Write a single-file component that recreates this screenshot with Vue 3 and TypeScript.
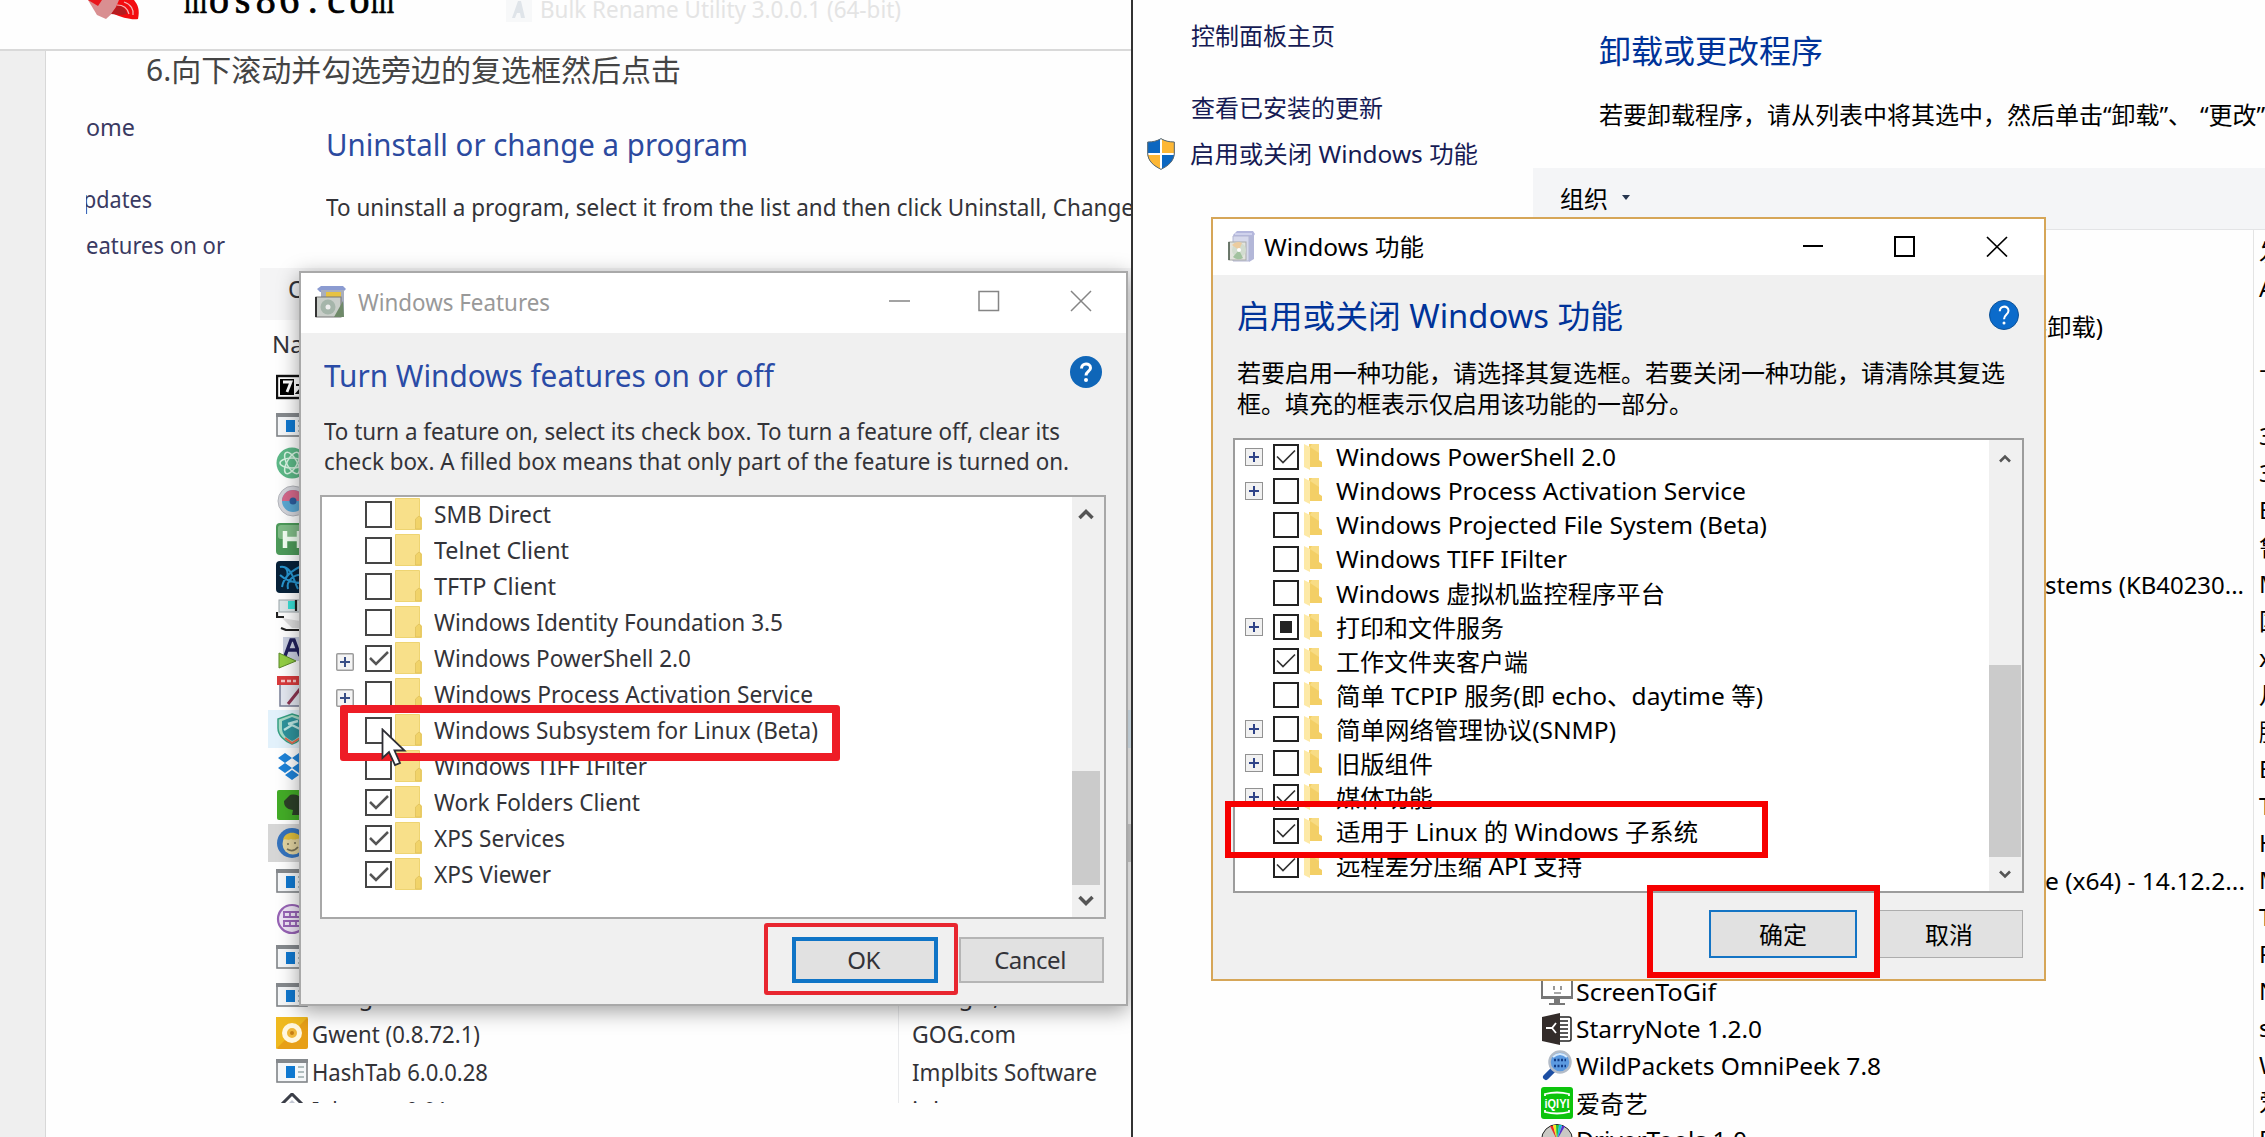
<script setup lang="ts">
import type { Directive } from 'vue'

type Check = 'on' | 'off' | 'part'

interface Feature {
  label: string
  width: number
  check: Check
  expand?: boolean
}

interface Program {
  icon: string
  name?: string
  width?: number
  publisher?: string
  publisherWidth?: number
  state?: string
}

interface InstalledRow {
  icon?: string
  name?: string
  width?: number
  tail?: string
  tailWidth?: number
  early?: boolean
  publisher: string
}

// Condenses or widens a single line so that it occupies the given width.
const vFit: Directive<HTMLElement, number | undefined> = {
  mounted(el, binding) {
    if (!binding.value) return
    const natural = el.getBoundingClientRect().width
    if (natural > 0) el.style.transform = `scaleX(${binding.value / natural})`
  },
}

const brand = [...'mos86.com']

const englishFeatures: Feature[] = [
  { label: 'SMB Direct', width: 117, check: 'off' },
  { label: 'Telnet Client', width: 135, check: 'off' },
  { label: 'TFTP Client', width: 122, check: 'off' },
  { label: 'Windows Identity Foundation 3.5', width: 349, check: 'off' },
  { label: 'Windows PowerShell 2.0', width: 257, check: 'on', expand: true },
  { label: 'Windows Process Activation Service', width: 379, check: 'off', expand: true },
  { label: 'Windows Subsystem for Linux (Beta)', width: 384, check: 'off' },
  { label: 'Windows TIFF IFilter', width: 213, check: 'off' },
  { label: 'Work Folders Client', width: 206, check: 'on' },
  { label: 'XPS Services', width: 131, check: 'on' },
  { label: 'XPS Viewer', width: 117, check: 'on' },
]

const chineseFeatures: Feature[] = [
  { label: 'Windows PowerShell 2.0', width: 280, check: 'on', expand: true },
  { label: 'Windows Process Activation Service', width: 410, check: 'off', expand: true },
  { label: 'Windows Projected File System (Beta)', width: 431, check: 'off' },
  { label: 'Windows TIFF IFilter', width: 231, check: 'off' },
  { label: 'Windows 虚拟机监控程序平台', width: 329, check: 'off' },
  { label: '打印和文件服务', width: 168, check: 'part', expand: true },
  { label: '工作文件夹客户端', width: 192, check: 'on' },
  { label: '简单 TCPIP 服务(即 echo、daytime 等)', width: 427, check: 'off' },
  { label: '简单网络管理协议(SNMP)', width: 280, check: 'off', expand: true },
  { label: '旧版组件', width: 97, check: 'off', expand: true },
  { label: '媒体功能', width: 97, check: 'on', expand: true },
  { label: '适用于 Linux 的 Windows 子系统', width: 362, check: 'on' },
  { label: '远程差分压缩 API 支持', width: 246, check: 'on' },
]

const programs: Program[] = [
  { icon: 'zip' },
  { icon: 'app' },
  { icon: 'atom' },
  { icon: 'disc' },
  { icon: 'h' },
  { icon: 'swirl' },
  { icon: 'pc' },
  { icon: 'a' },
  { icon: 'pdf' },
  { icon: 'shield', state: 'hover' },
  { icon: 'drop' },
  { icon: 'leaf' },
  { icon: 'vault', state: 'picked' },
  { icon: 'app' },
  { icon: 'ddc' },
  { icon: 'app' },
  { icon: 'app', name: 'Google Chrome', publisher: 'Google, Inc.' },
  { icon: 'gwent', name: 'Gwent (0.8.72.1)', width: 168, publisher: 'GOG.com', publisherWidth: 104 },
  { icon: 'app', name: 'HashTab 6.0.0.28', width: 176, publisher: 'Implbits Software', publisherWidth: 185 },
  { icon: 'ink', name: 'Inkscape 0.91', width: 136, publisher: 'inkscape.org' },
]

const installed: InstalledRow[] = [
  { publisher: 'Adobe' },
  { tail: '装卸载)', tailWidth: 80, early: true, publisher: '' },
  { publisher: '上海' },
  { publisher: '' },
  { publisher: '360' },
  { publisher: '360' },
  { publisher: 'Eclipse' },
  { publisher: '鲁大师' },
  { tail: 'stems (KB40230...', tailWidth: 199, publisher: 'Microsoft' },
  { publisher: '国网' },
  { publisher: 'xterm' },
  { publisher: '月光' },
  { publisher: '腾讯' },
  { publisher: 'Epic' },
  { publisher: 'Tencent' },
  { publisher: 'Huawei' },
  { tail: 'e (x64) - 14.12.2...', tailWidth: 200, publisher: 'Microsoft' },
  { publisher: 'Tim' },
  { publisher: 'Python' },
  { icon: 'screen', name: 'ScreenToGif', width: 140, publisher: 'Nicke' },
  { icon: 'starry', name: 'StarryNote 1.2.0', width: 186, publisher: 'starry' },
  { icon: 'peek', name: 'WildPackets OmniPeek 7.8', width: 305, publisher: 'WildPackets' },
  { icon: 'iqiyi', name: '爱奇艺', width: 72, publisher: '爱奇艺' },
  { icon: 'cd', name: 'DriverTools 1.0', width: 171, publisher: 'DriverTools' },
]
</script>

<template>
  <div class="stage">
    <section class="left">
      <header class="site">
        <svg class="logo" viewBox="0 0 52 20">
          <path d="M0 0H34L30 8L18 19L9 15Z" fill="#d98f91" />
          <path d="M0 0H14L10 6Z" fill="#e9161c" />
          <path d="M31 0H46C50 5 52 10 50 19C44 20 34 18 24 13L28 7Z" fill="#f30c10" />
          <path d="M30 5C36 7 38 10 39 14L34 15L23 14Z" fill="#b61c20" />
          <path d="M29 5C37 5 40 10 41 14M36 2C43 4 46 10 45 15" stroke="#f3b9b9" stroke-width="1.2" fill="none" />
        </svg>
        <span class="brand"><span v-for="(c, i) in brand" :key="i" class="cell"><span v-fit="c === 'm' ? 23 : undefined" class="glyph">{{ c }}</span></span></span>
        <svg class="ghost-icon" viewBox="0 0 26 22">
          <rect width="26" height="22" fill="#f7f8f9" />
          <path d="M6 18L12 1H15L19 18H15L14 13H11L9 18Z" fill="#dfe4e9" />
        </svg>
        <span v-fit="361" class="t ghost">Bulk Rename Utility 3.0.0.1 (64-bit)</span>
      </header>
      <div class="page">
        <article class="article">
          <p class="caption"><span v-fit="535" class="t">6.向下滚动并勾选旁边的复选框然后点击</span></p>
          <div class="shot">
            <nav class="shot-nav">
              <div><span v-fit="49" class="t">ome</span></div>
              <div><span v-fit="69" class="t shift">pdates</span></div>
              <div><span v-fit="139" class="t">eatures on or</span></div>
            </nav>
            <div class="shot-main">
              <h2><span v-fit="422" class="t">Uninstall or change a program</span></h2>
              <p class="lead"><span v-fit="808" class="t">To uninstall a program, select it from the list and then click Uninstall, Change</span></p>
              <div class="shot-bar">Organize</div>
              <div class="shot-head">Name</div>
              <div class="programs">
                <div v-for="(p, i) in programs" :key="i" class="program" :class="p.state">
                  <svg class="p-icon" viewBox="0 0 32 32">
                    <g v-if="p.icon === 'app'">
                      <rect x="1" y="5" width="30" height="22" fill="#f5f7f9" stroke="#808488" stroke-width="1.6" />
                      <rect x="0" y="4" width="32" height="4" fill="#85898d" />
                      <rect x="10" y="11" width="9" height="12" fill="#0f78d0" />
                      <path d="M22 12H28M22 17H28M22 22H28" stroke="#9aa" stroke-width="1.6" />
                    </g>
                    <g v-else-if="p.icon === 'zip'">
                      <rect x="1" y="5" width="30" height="22" fill="#fff" stroke="#111" stroke-width="2.4" />
                      <rect x="4" y="8" width="14" height="16" fill="#000" />
                      <path d="M7 11H15L11 21" stroke="#fff" stroke-width="2.8" fill="none" />
                      <path d="M20 14H28L21 22H28" stroke="#111" stroke-width="2" fill="none" />
                    </g>
                    <g v-else-if="p.icon === 'atom'">
                      <circle cx="16" cy="16" r="15.5" fill="#5cb887" />
                      <g fill="none" stroke="#d7f3e2" stroke-width="1.5">
                        <ellipse cx="16" cy="16" rx="12" ry="5" />
                        <ellipse cx="16" cy="16" rx="12" ry="5" transform="rotate(60 16 16)" />
                        <ellipse cx="16" cy="16" rx="12" ry="5" transform="rotate(120 16 16)" />
                      </g>
                    </g>
                    <g v-else-if="p.icon === 'disc'">
                      <circle cx="17" cy="16" r="15" fill="#d5d6dc" stroke="#b3b5bb" />
                      <circle cx="17" cy="16" r="11" fill="#5aa7d2" />
                      <path d="M6 16A11 11 0 0 1 28 16Z" fill="#d5688a" />
                      <circle cx="17" cy="16" r="3.5" fill="#2c5d9c" />
                    </g>
                    <g v-else-if="p.icon === 'h'">
                      <rect width="32" height="32" rx="4" fill="#4d9a5a" />
                      <rect x="2" y="2" width="28" height="14" rx="3" fill="#80bb87" />
                      <path d="M9 8V25M23 8V25M9 16H23" stroke="#f3fff3" stroke-width="4.5" />
                    </g>
                    <g v-else-if="p.icon === 'swirl'">
                      <rect width="32" height="32" rx="4" fill="#07223a" />
                      <path d="M4 6C12 4 14 14 8 20M6 26C8 14 18 8 28 4M12 28C10 20 18 12 28 14M4 14C10 20 18 22 28 22M8 6C16 8 18 20 22 28" stroke="#2795cf" stroke-width="2" fill="none" />
                    </g>
                    <g v-else-if="p.icon === 'pc'">
                      <rect x="3" y="1" width="22" height="12" fill="#dce6e8" stroke="#9aa4a8" />
                      <rect x="12" y="2" width="8" height="8" fill="#38dcd3" />
                      <path d="M20 1V12M1 13V18H8M5 29L10 31H30" stroke="#222" stroke-width="2.2" fill="none" />
                      <path d="M6 19L16 29H28L24 22Z" fill="#dedede" />
                    </g>
                    <g v-else-if="p.icon === 'a'">
                      <rect x="7" y="0" width="24" height="24" fill="#c9cfe0" />
                      <path d="M9 19L15 3H18L24 19M11 13H21" stroke="#20215c" stroke-width="3.4" fill="none" />
                      <path d="M3 16L20 24L3 31Z" fill="#93cf45" stroke="#5c8a2a" />
                    </g>
                    <g v-else-if="p.icon === 'pdf'">
                      <rect x="4" y="6" width="24" height="25" fill="#e3e7f0" stroke="#777e96" stroke-width="1.5" />
                      <rect x="1" y="1" width="26" height="9" fill="#d93a3c" />
                      <path d="M12 29L24 14" stroke="#8c3451" stroke-width="3" />
                      <path d="M5 6H20" stroke="#f6c5c5" stroke-width="2.5" stroke-dasharray="4 2" />
                    </g>
                    <g v-else-if="p.icon === 'shield'">
                      <path d="M16 1L29 5V15C29 24 22 29 16 31C8 28 2 22 2 15V6Z" fill="#a9dcc8" stroke="#36a084" stroke-width="1.5" />
                      <path d="M16 4L26 8V15C26 22 21 26 16 28C10 25 6 21 6 15V8Z" fill="#2f939c" />
                      <path d="M8 17L16 12L24 16M12 11L22 8" stroke="#bde7e3" stroke-width="2.4" fill="none" />
                      <path d="M9 25L16 30L24 25" stroke="#e16a50" stroke-width="2" fill="none" />
                    </g>
                    <g v-else-if="p.icon === 'drop'" fill="#1f83d8">
                      <path d="M9 2L16 7L9 12L2 7ZM23 2L30 7L23 12L16 7ZM9 12L16 17L9 22L2 17ZM23 12L30 17L23 22L16 17ZM16 19L23 24L16 29L9 24Z" />
                    </g>
                    <g v-else-if="p.icon === 'leaf'">
                      <rect x="1" y="1" width="30" height="30" rx="2" fill="#43ac27" />
                      <path d="M8 12L14 6C22 4 27 8 26 18L23 26H16L17 21C10 20 8 17 8 12Z" fill="#2d4028" />
                    </g>
                    <g v-else-if="p.icon === 'vault'">
                      <circle cx="16" cy="16" r="15" fill="#3573bd" />
                      <circle cx="17" cy="17" r="10.5" fill="#e2d4a1" />
                      <path d="M7 13C9 3 23 4 26 12C22 10 20 14 15 12C12 14 9 11 7 13Z" fill="#dfbd3c" />
                      <path d="M12 16V18M19 15V17M11 22Q17 26 22 20" stroke="#7b7458" stroke-width="1.6" fill="none" />
                    </g>
                    <g v-else-if="p.icon === 'ddc'">
                      <circle cx="16" cy="16" r="14" fill="#efe5f6" stroke="#9763b5" stroke-width="2.2" />
                      <path d="M7 9H26M7 14H26M7 18H26M7 23H26M8 9V14M14 9V14M20 9V14M8 18V23M14 18V23M20 18V23" stroke="#9763b5" stroke-width="1.8" />
                    </g>
                    <g v-else-if="p.icon === 'gwent'">
                      <rect width="32" height="32" rx="2" fill="#e79f17" />
                      <path d="M0 0H32L0 32Z" fill="#efb91f" />
                      <circle cx="16" cy="16" r="7.5" fill="#f0b73a" stroke="#fff7df" stroke-width="5" />
                      <circle cx="16" cy="16" r="2" fill="#c47c12" />
                    </g>
                    <g v-else>
                      <path d="M16 1L29 14L16 26L3 14Z" fill="#fff" stroke="#3b3e48" stroke-width="3" />
                      <path d="M16 7L24 15H8Z" fill="#c3c8d4" />
                    </g>
                  </svg>
                  <span class="p-name"><span v-if="p.name" v-fit="p.width" class="t">{{ p.name }}</span></span>
                  <span v-if="p.publisher" v-fit="p.publisherWidth" class="t">{{ p.publisher }}</span>
                </div>
              </div>
            </div>
          </div>
        </article>
      </div>

      <div class="dialog en">
        <div class="titlebar">
          <svg class="d-icon" viewBox="0 0 32 32">
            <path d="M2 3L6 0H28L31 3L28 6H5Z" fill="#8b9bd1" />
            <rect x="6" y="4" width="23" height="26" fill="#a8aebe" />
            <rect x="11" y="6" width="15" height="8" fill="#e6c243" />
            <rect x="1" y="11" width="25" height="20" fill="#c9cec9" stroke="#777" stroke-width="1" />
            <circle cx="13" cy="21" r="7.5" fill="#a5b5aa" />
            <circle cx="13" cy="21" r="2.5" fill="#eee" />
            <path d="M19 31L28 15L29 31Z" fill="#6f8a69" />
            <path d="M1 11V31" stroke="#333" stroke-width="2" />
          </svg>
          <span v-fit="192" class="t d-title">Windows Features</span>
          <svg class="controls" viewBox="0 0 204 22">
            <g fill="none" stroke="#858585" stroke-width="1.5">
              <path d="M1 11H22M91 1.500H110.500V20.500H91ZM183 1L203 21M203 1L183 21" />
            </g>
          </svg>
        </div>
        <div class="d-head">
          <h3><span v-fit="450" class="t">Turn Windows features on or off</span></h3>
          <svg class="help" viewBox="0 0 32 32"><circle cx="16" cy="16" r="16" fill="#0f66b8" /><path d="M11.500 12.500C11.500 6.500 20.500 6.500 20.500 12C20.500 15.500 16 15.500 16 19.500" fill="none" stroke="#fff" stroke-width="3" /><circle cx="16" cy="24" r="2" fill="#fff" /></svg>
        </div>
        <p class="d-text">
          <span v-fit="736" class="t">To turn a feature on, select its check box. To turn a feature off, clear its</span>
          <span v-fit="745" class="t">check box. A filled box means that only part of the feature is turned on.</span>
        </p>
        <div class="tree">
          <div class="rows">
            <div v-for="f in englishFeatures" :key="f.label" class="row">
              <span class="expander"><svg v-if="f.expand" viewBox="0 0 18 18"><rect x=".75" y=".75" width="16.500" height="16.500" rx="1" fill="#f4f4f4" stroke="#9c9c9c" stroke-width="1.500" /><path d="M4 9H14M9 4V14" stroke="#3a4f86" stroke-width="2" /></svg></span>
              <svg class="box" viewBox="0 0 27 27"><rect x="1" y="1" width="25" height="25" fill="#fff" stroke="#454545" stroke-width="2" /><path v-if="f.check === 'on'" d="M5 13L11 19L23 7" fill="none" stroke="#555" stroke-width="2.500" /></svg>
              <svg class="folder" viewBox="0 0 27 32"><path d="M.5.5H24.500V18L26.500 20V31.500H.5Z" fill="#f8e08a" stroke="#eed472" /><path d="M24 18L20.500 21V31H26V20Z" fill="#f1d369" stroke="#e0c05c" stroke-width=".8" /></svg>
              <span v-fit="f.width" class="t">{{ f.label }}</span>
            </div>
          </div>
          <div class="scroll">
            <svg viewBox="0 0 16 13"><path d="M1.500 10L8 3.500L14.500 10" fill="none" stroke="#555" stroke-width="3.500" /></svg>
            <i></i>
            <svg viewBox="0 0 16 13"><path d="M1.500 3L8 9.500L14.500 3" fill="none" stroke="#555" stroke-width="3.500" /></svg>
          </div>
        </div>
        <footer class="buttons">
          <button class="ok">OK</button>
          <button>Cancel</button>
        </footer>
      </div>
      <div class="mark en-row"></div>
      <div class="mark en-ok"></div>
      <svg class="cursor" viewBox="0 0 26 39"><path d="M1.500 1.500V30L8 24L14 37L19 35L13.500 22.500H23.500Z" fill="#fff" stroke="#2e2e35" stroke-width="1.800" /></svg>
    </section>

    <section class="right">
      <nav class="cp-nav">
        <a>控制面板主页</a>
        <a>查看已安装的更新</a>
        <a class="with-shield">
          <svg viewBox="0 0 28 32">
            <path d="M14 .5C18 3 22 4 27.500 4V15C27.500 23 21 28 14 31.500C7 28 .5 23 .5 15V4C6 4 10 3 14 .5Z" fill="#0c67c0" />
            <path d="M14 .5C18 3 22 4 27.500 4V15.500H14Z" fill="#fdb735" />
            <path d="M.5 15.500H14V31.500C7 28 .5 23 .5 15.500Z" fill="#fdb735" />
            <path d="M14 1V31M1 16H27" stroke="#fff" stroke-width="2" />
            <path d="M14 .7C18 3 22 4 27.300 4V15C27.300 23 21 28 14 31.300C7 28 .7 23 .7 15V4C6 4 10 3 14 .7Z" fill="none" stroke="#5c6a72" />
          </svg>
          <span v-fit="288" class="t">启用或关闭 Windows 功能</span>
        </a>
      </nav>
      <div class="cp-main">
        <h2>卸载或更改程序</h2>
        <p class="lead">若要卸载程序，请从列表中将其选中，然后单击<span class="q">“</span>卸载<span class="q">”</span><span class="comma">、</span><span class="q">“</span>更改<span class="q">”</span>或</p>
        <div class="cp-bar">组织<svg viewBox="0 0 8 5"><path d="M0 0H8L4 5Z" fill="#26354f" /></svg></div>
        <div class="cp-list">
          <div class="names">
            <div v-for="(r, i) in installed" :key="i" class="installed">
              <svg v-if="r.icon" class="p-icon" viewBox="0 0 32 32">
                <g v-if="r.icon === 'screen'">
                  <rect x="1" y="0" width="30" height="22" fill="#fff" stroke="#777" stroke-width="2" />
                  <rect x="0" y="20" width="32" height="3" fill="#777" />
                  <path d="M13 23H19V27H24V29H8V27H13Z" fill="#777" />
                  <path d="M13 10V14M20 10V14M13 17H20" stroke="#555" stroke-width="1.200" />
                </g>
                <g v-else-if="r.icon === 'starry'">
                  <rect x="14" y="4" width="16" height="24" rx="2" fill="#fff" stroke="#222" stroke-width="1.500" />
                  <path d="M19 8H27M19 12H27M19 16H27M19 20H27M19 24H27" stroke="#222" stroke-width="1.300" />
                  <path d="M1 4L19 0V32L1 28Z" fill="#332c2a" />
                  <path d="M5 15L11 15L15 10M11 15L15 20" stroke="#fff" stroke-width="1.800" fill="none" />
                </g>
                <g v-else-if="r.icon === 'peek'">
                  <path d="M5 27L13 19" stroke="#1d4fa3" stroke-width="6" stroke-linecap="round" />
                  <circle cx="19" cy="12" r="10.500" fill="#5c9ae0" stroke="#b3bcc8" stroke-width="2.500" />
                  <path d="M13 10H25M13 16H25" stroke="#123c87" stroke-width="2.600" stroke-dasharray="2 1.500" />
                  <path d="M12 7Q19 1 26 7" stroke="#d8eafc" stroke-width="2" fill="none" />
                </g>
                <g v-else-if="r.icon === 'iqiyi'">
                  <rect width="32" height="32" rx="3" fill="#0cc40c" />
                  <path d="M4 9V7Q16 4 28 7V9M4 23V25Q16 28 28 25V23" stroke="#fff" stroke-width="1.800" fill="none" />
                  <text x="16" y="21" text-anchor="middle" class="iq" textLength="25" lengthAdjust="spacingAndGlyphs">iQIYI</text>
                </g>
                <g v-else>
                  <circle cx="16" cy="16" r="15.500" fill="#c9c9c4" stroke="#222" />
                  <path d="M16 16L9 2H12Z" fill="#ed2b24" /><path d="M16 16L12 1H15Z" fill="#f7e81c" />
                  <path d="M16 16L15 1H18Z" fill="#1fc13a" /><path d="M16 16L18 1H21Z" fill="#14bfe2" />
                  <path d="M16 16L21 2H24Z" fill="#5631c9" />
                </g>
              </svg>
              <span v-if="r.name" v-fit="r.width" class="t">{{ r.name }}</span>
              <span v-if="r.tail" class="tail" :class="{ early: r.early }"><span v-fit="r.tailWidth" class="t">{{ r.tail }}</span></span>
            </div>
          </div>
          <div class="pubs">
            <div class="pub head">发布者</div>
            <div v-for="(r, i) in installed" :key="i" class="pub">{{ r.publisher }}</div>
          </div>
        </div>
      </div>

      <div class="dialog zh">
        <div class="titlebar">
          <svg class="d-icon" viewBox="0 0 28 32">
            <path d="M5 4L9 0H25L27 3L25 6H6Z" fill="#b4b7dd" />
            <path d="M7 3H24" stroke="#d9dbf0" stroke-width="1.500" />
            <path d="M5 5H21V30H5Z" fill="#d6d9ec" stroke="#b3b6d2" />
            <path d="M21 6L26 4V28L21 31Z" fill="#b3b7d8" />
            <rect x="1" y="11" width="17" height="18" fill="#e3e4de" stroke="#a9aba9" />
            <circle cx="11" cy="19" r="7" fill="#d2dccf" />
            <path d="M11 19L4 14A8 8 0 0 1 14 12Z" fill="#ecccA0" />
            <path d="M11 19L5 26A8 8 0 0 0 15 27Z" fill="#a2c29f" />
            <circle cx="11" cy="19" r="2" fill="#fff" />
            <path d="M1 11V29" stroke="#4a5a4a" stroke-width="1.500" />
          </svg>
          <span v-fit="160" class="t d-title">Windows 功能</span>
          <svg class="controls" viewBox="0 0 205 21">
            <g fill="none" stroke="#000" stroke-width="2">
              <path d="M0 10H20M92 1H111V20H92Z" />
              <path d="M184 1L204 20.500M204 1L184 20.500" stroke-width="1.700" />
            </g>
          </svg>
        </div>
        <div class="d-head">
          <h3><span v-fit="386" class="t">启用或关闭 Windows 功能</span></h3>
          <svg class="help" viewBox="0 0 32 32"><circle cx="16" cy="16" r="15.500" fill="#0b6bcb" stroke="#0b4f94" /><path d="M11.500 12C11.500 5.500 20.800 5.500 20.800 11.500C20.800 15.500 16 15.500 16 20.500" fill="none" stroke="#fff" stroke-width="2.200" /><circle cx="16" cy="24.500" r="1.600" fill="#fff" /></svg>
        </div>
        <p class="d-text">
          <span class="t">若要启用一种功能，请选择其复选框。若要关闭一种功能，请清除其复选</span>
          <span class="t">框。填充的框表示仅启用该功能的一部分。</span>
        </p>
        <div class="tree">
          <div class="rows">
            <div v-for="f in chineseFeatures" :key="f.label" class="row">
              <span class="expander"><svg v-if="f.expand" viewBox="0 0 18 18"><rect x=".5" y=".5" width="17" height="17" fill="#f1f1f1" stroke="#929292" /><path d="M4 9H14M9 4V14" stroke="#2f4388" stroke-width="2" /></svg></span>
              <svg class="box" viewBox="0 0 26 26"><rect x="1" y="1" width="24" height="24" fill="#fff" stroke="#222" stroke-width="2" /><path v-if="f.check === 'on'" d="M4 12.500L10 18.500L22 6.500" fill="none" stroke="#333" stroke-width="1.700" /><rect v-if="f.check === 'part'" x="7" y="7" width="12" height="12" fill="#222" /></svg>
              <svg class="folder" viewBox="0 0 19 28"><path d="M5 1H15V17L18 19V24H5Z" fill="#f3cf66" /><path d="M0 1L6 4V27L0 24Z" fill="#fde9a6" /><path d="M6 4L8 1H15V10Z" fill="#f8dc84" /></svg>
              <span v-fit="f.width" class="t">{{ f.label }}</span>
            </div>
          </div>
          <div class="scroll">
            <svg viewBox="0 0 12 9"><path d="M1 7.500L6 2.500L11 7.500" fill="none" stroke="#555" stroke-width="2.600" /></svg>
            <i></i>
            <svg viewBox="0 0 12 9"><path d="M1 1.500L6 6.500L11 1.500" fill="none" stroke="#555" stroke-width="2.600" /></svg>
          </div>
        </div>
        <footer class="buttons">
          <button class="ok">确定</button>
          <button>取消</button>
        </footer>
      </div>
      <div class="mark zh-row"></div>
      <div class="mark zh-ok"></div>
    </section>
  </div>
</template>

<style>
body {
  margin: 0;
  overflow: hidden;
}
</style>

<style scoped>
* {
  box-sizing: border-box;
}
.stage {
  display: flex;
  width: 2265px;
  height: 1137px;
  overflow: hidden;
  background: #fff;
  font-family: 'Noto Sans', 'Noto Sans CJK SC', sans-serif;
  font-size: 24px;
  color: #000;
  white-space: nowrap;
}
.t {
  display: inline-block;
  width: max-content;
  transform-origin: left center;
}
h2,
h3,
p {
  margin: 0;
  font-weight: 400;
}
svg {
  display: block;
  flex: none;
}

/* left half */
.left {
  position: relative;
  display: flex;
  flex-direction: column;
  width: 1133px;
  flex: none;
  overflow: hidden;
  border-right: 2px solid #333;
  color: #333338;
}
.site {
  display: flex;
  align-items: flex-start;
  height: 51px;
  flex: none;
  padding-left: 88px;
  border-bottom: 2px solid #d9d9d9;
  background: #fefefe;
}
.logo {
  width: 52px;
  height: 20px;
}
.brand {
  display: flex;
  width: 322px;
  margin: -26px 0 0 44px;
  font: 400 40px/52px 'Liberation Serif', serif;
  color: #000;
  -webkit-text-stroke: 0.7px #000;
}
.cell {
  display: flex;
  justify-content: center;
  width: 23.4px;
}
.glyph {
  flex: none;
}
.ghost-icon {
  width: 26px;
  height: 22px;
}
.ghost {
  margin: -7px 0 0 8px;
  line-height: 32px;
  color: #e4e4e4;
}
.page {
  flex: 1;
  padding-left: 45px;
  background: #efefef;
}
.article {
  height: 100%;
  padding-left: 40px;
  border-left: 1px solid #d8d8d8;
  background: #fefefe;
}
.caption {
  height: 45px;
  padding-left: 60px;
  font-size: 30px;
  line-height: 37px;
  color: #444;
}
.shot {
  display: flex;
  height: 1007px;
  overflow: hidden;
}
.shot-nav {
  width: 174px;
  flex: none;
  padding-top: 15px;
  line-height: 32px;
  color: #3a3a62;
}
.shot-nav div {
  margin-bottom: 40px;
}
.shot-nav div + div {
  margin-bottom: 14px;
}
.shift {
  margin-left: -3px;
}
.shot-main {
  flex: 1;
}
.shot-main h2 {
  padding: 28px 0 0 66px;
  font-size: 31px;
  line-height: 40px;
  color: #2c4a9f;
}
.shot-main .lead {
  padding: 27px 0 0 66px;
  line-height: 32px;
}
.shot-bar {
  height: 52px;
  margin-top: 45px;
  padding-left: 28px;
  line-height: 41px;
  background: #f4f4f5;
}
.shot-head {
  height: 48px;
  padding: 6px 0 0 12px;
  line-height: 36px;
}
.programs {
  background: linear-gradient(#e9eaec, #e9eaec) 638px 0 / 1px 100% no-repeat;
}
.program {
  display: flex;
  align-items: center;
  height: 38px;
  margin-left: 8px;
  padding-left: 8px;
}
.program.hover {
  background: #e2f1fb;
}
.program.picked {
  background: #d6d6d6;
}
.p-icon {
  width: 32px;
  height: 32px;
}
.p-name {
  width: 599px;
  margin-left: 4px;
  margin-right: 1px;
}

/* dialogs */
.dialog {
  position: absolute;
  display: flex;
  flex-direction: column;
  background: #f0f0f0;
}
.titlebar,
.d-head {
  display: flex;
  align-items: center;
  flex: none;
}
.titlebar {
  background: #fff;
}
.controls,
.help {
  margin-left: auto;
}
.d-text {
  display: flex;
  flex-direction: column;
}
.tree {
  display: flex;
  flex: none;
  overflow: hidden;
  background: #fff;
}
.rows {
  flex: 1;
}
.row {
  display: flex;
  align-items: center;
}
.row .t {
  margin-top: -2px;
}
.expander svg {
  width: 18px;
  height: 18px;
}
.scroll {
  display: flex;
  flex-direction: column;
  align-items: center;
  justify-content: space-between;
  background: #f0f0f0;
}
.scroll i {
  width: 100%;
  margin-top: auto;
  background: #cbcbcb;
}
.buttons {
  display: flex;
  justify-content: flex-end;
}
button {
  padding: 0;
  border: 1px solid #adadad;
  border-radius: 0;
  background: #e1e1e1;
  font: inherit;
  color: inherit;
}

.en {
  left: 299px;
  top: 271px;
  width: 829px;
  height: 735px;
  border: 2px solid #a9a9a9;
  box-shadow: 0 5px 20px rgba(0, 0, 0, 0.38);
}
.en .titlebar {
  height: 60px;
  padding: 0 34px 0 14px;
}
.en .d-icon {
  width: 32px;
  height: 32px;
  margin-top: -3px;
}
.en .d-title {
  margin: -4px 0 0 11px;
  color: #999;
}
.en .controls {
  width: 204px;
  height: 22px;
  margin-top: -4px;
}
.en .d-head {
  height: 83px;
  padding: 0 24px 0 23px;
}
.en h3 {
  font-size: 31px;
  line-height: 40px;
  color: #2a4ba6;
}
.en .help {
  width: 32px;
  height: 32px;
  margin-top: -5px;
}
.en .d-text {
  height: 79px;
  padding-left: 23px;
  line-height: 30px;
}
.en .tree {
  width: 786px;
  height: 424px;
  margin-left: 19px;
  border: 2px solid #a8a8a8;
}
.en .row {
  height: 36px;
}
.en .rows {
  margin-top: -1px;
}
.en .expander {
  width: 29px;
  margin-left: 14px;
  padding-top: 8px;
}
.en .box {
  width: 27px;
  height: 27px;
}
.en .folder {
  width: 27px;
  height: 32px;
  margin: 0 12px 0 3px;
}
.en .scroll {
  width: 32px;
  padding: 11px 4px 10px 0;
}
.en .scroll svg {
  width: 16px;
  height: 13px;
}
.en .scroll i {
  height: 114px;
  margin-bottom: 9px;
}
.en .buttons {
  padding: 18px 22px 0 0;
}
.en button {
  width: 145px;
  height: 46px;
  padding-right: 3px;
  line-height: 40px;
  border: 2px solid #b5b5b5;
  letter-spacing: -0.5px;
}
.en .ok {
  width: 146px;
  margin-right: 21px;
  line-height: 36px;
  border: 4px solid #0f74c6;
}
.mark {
  position: absolute;
}
.en-row {
  left: 340px;
  top: 705px;
  width: 500px;
  height: 56px;
  border: 8px solid #ee1d26;
  border-radius: 3px;
}
.en-ok {
  left: 764px;
  top: 923px;
  width: 194px;
  height: 72px;
  border: 4px solid #e8262f;
  border-radius: 3px;
}
.cursor {
  position: absolute;
  left: 381px;
  top: 728px;
  width: 26px;
  height: 39px;
}

/* right half */
.right {
  position: relative;
  display: flex;
  flex: 1;
  overflow: hidden;
  background: #fefefe;
}
.cp-nav {
  display: flex;
  flex-direction: column;
  width: 400px;
  flex: none;
  padding: 20px 0 0 58px;
  line-height: 32px;
  color: #161b54;
}
.cp-nav a:nth-child(2) {
  margin: 40px 0 14px;
}
.with-shield {
  display: flex;
  align-items: center;
  margin-left: -44px;
}
.with-shield svg {
  width: 28px;
  height: 32px;
  margin-right: 15px;
}
.cp-main {
  display: flex;
  flex-direction: column;
  flex: 1;
  min-width: 0;
}
.cp-main h2 {
  padding: 31px 0 0 66px;
  font-size: 32px;
  line-height: 40px;
  color: #003399;
}
.cp-main .lead {
  padding: 28px 0 0 66px;
  line-height: 32px;
}
.q {
  display: inline-block;
  width: 8.5px;
}
.comma {
  display: inline-block;
  width: 32px;
}
.cp-bar {
  display: flex;
  align-items: center;
  height: 62px;
  flex: none;
  margin-top: 37px;
  padding: 0 0 3px 27px;
  border-bottom: 1px solid #e3e4e6;
  background: #f4f5f7;
}
.cp-bar svg {
  width: 8px;
  height: 5px;
  margin-left: 14px;
}
.cp-list {
  display: flex;
}
.names {
  width: 720px;
  flex: none;
  padding-top: 40px;
}
.installed {
  display: flex;
  align-items: center;
  height: 37px;
  padding-left: 8px;
}
.installed .t {
  margin-top: -1px;
}
.installed .p-icon {
  margin: 1px 3px 0 0;
}
.tail {
  padding-left: 504px;
}
.tail.early {
  padding-left: 482px;
}
.pubs {
  flex: 1;
  min-width: 0;
  padding-left: 5px;
  border-left: 1px solid #e4e4e4;
  overflow: hidden;
}
.pub {
  height: 37px;
  line-height: 36px;
}
.pub.head {
  height: 40px;
  line-height: 43px;
}
.iq {
  font: 700 13px 'Liberation Sans', sans-serif;
  fill: #fff;
}

.zh {
  left: 78px;
  top: 217px;
  width: 835px;
  height: 764px;
  border: 2px solid #d6a658;
}
.zh .titlebar {
  height: 56px;
  padding: 0 36px 0 15px;
}
.zh .d-icon {
  width: 28px;
  height: 32px;
  margin-top: -1px;
}
.zh .d-title {
  margin: -4px 0 0 8px;
}
.zh .controls {
  width: 205px;
  height: 21px;
  margin-top: -2px;
}
.zh .d-head {
  height: 82px;
  padding: 0 25px 0 24px;
}
.zh h3 {
  font-size: 32px;
  line-height: 40px;
  color: #003399;
}
.zh .help {
  width: 30px;
  height: 30px;
  margin-top: -2px;
}
.zh .d-text {
  height: 81px;
  padding-left: 24px;
  line-height: 31px;
}
.zh .tree {
  width: 791px;
  height: 455px;
  margin-left: 20px;
  border: 2px solid #9c9c9c;
}
.zh .row {
  height: 34px;
}
.zh .expander {
  width: 28px;
  margin-left: 10px;
}
.zh .box {
  width: 26px;
  height: 26px;
}
.zh .folder {
  width: 19px;
  height: 28px;
  margin: 0 13px 0 5px;
}
.zh .scroll {
  width: 33px;
  padding: 14px 1px 12px 0;
}
.zh .scroll svg {
  width: 12px;
  height: 9px;
}
.zh .scroll i {
  height: 192px;
  margin-bottom: 13px;
}
.zh .buttons {
  padding: 17px 21px 0 0;
}
.zh button {
  width: 148px;
  height: 48px;
  padding-bottom: 2px;
}
.zh .ok {
  margin-right: 18px;
  border: 2px solid #1474c4;
}
.zh-row {
  left: 92px;
  top: 801px;
  width: 543px;
  height: 57px;
  border: 6px solid #f60000;
}
.zh-ok {
  left: 514px;
  top: 885px;
  width: 233px;
  height: 93px;
  border: 6px solid #f60000;
}
</style>
